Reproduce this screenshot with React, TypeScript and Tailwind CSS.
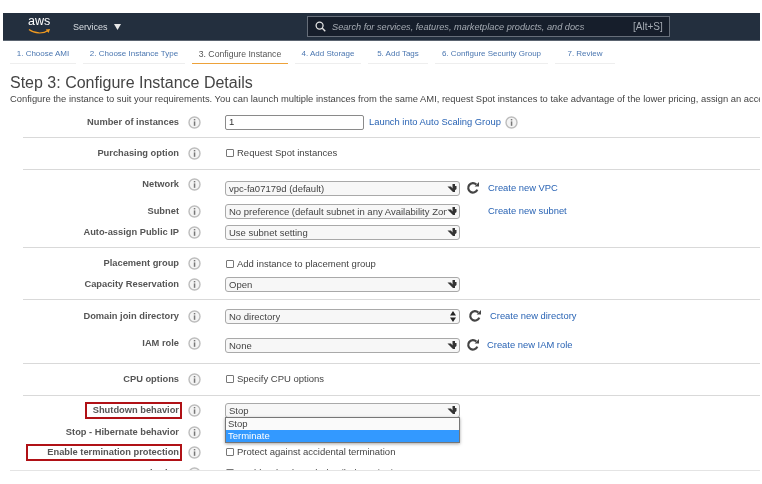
import React from "react";

function Info({ className = "" }: { className?: string }) {
  return (
    <svg width="13" height="13" viewBox="0 0 13 13" className={"shrink-0 " + className}>
      <circle cx="6.5" cy="6.5" r="5.5" fill="#f4f4f4" stroke="#bdbdbd" strokeWidth="1.4" />
      <rect x="5.8" y="5.4" width="1.5" height="4.4" fill="#777" />
      <rect x="5.8" y="3" width="1.5" height="1.4" fill="#777" />
    </svg>
  );
}

function Arrow() {
  return (
    <svg width="10" height="10" viewBox="0 0 10 10" className="shrink-0">
      <path d="M0.5 3.5 L4 3.5 L5.5 5.5 L5.5 1 L8 1 L8 9 L6 9 Z" fill="#333" />
      <path d="M6 3 L9.5 3 L9.5 6 L7 8 Z" fill="#333" />
    </svg>
  );
}

function Stepper() {
  return (
    <svg width="6" height="11" viewBox="0 0 6 11" className="shrink-0">
      <path d="M3 0 L6 4.4 L0 4.4 Z M3 11 L6 6.6 L0 6.6 Z" fill="#222" />
    </svg>
  );
}

function Refresh({ className = "" }: { className?: string }) {
  return (
    <svg width="14" height="14" viewBox="0 0 14 14" fill="none" className={"shrink-0 " + className}>
      <path d="M11.3 8.6 A4.7 4.7 0 1 1 10.3 3.6" stroke="#444" strokeWidth="2.2" />
      <path d="M8.6 5.6 L13 5.6 L13 1 Z" fill="#444" />
    </svg>
  );
}

function Select({ value, stepper = false }: { value: string; stepper?: boolean }) {
  return (
    <div className="w-[235px] h-[15px] shrink-0 flex items-center justify-between pl-[3px] pr-[2px] rounded-[3px] border border-[#a9a9a9] bg-[#f7f7f7] text-[#444] whitespace-nowrap overflow-hidden">
      <span className="overflow-hidden pt-[1px]">{value}</span>
      {stepper ? <span className="pr-[1px]"><Stepper /></span> : <Arrow />}
    </div>
  );
}

function Check({ label }: { label: string }) {
  return (
    <div className="flex items-center gap-[3px] text-[#444] whitespace-nowrap">
      <span className="w-[8px] h-[8px] ml-[1px] border border-[#777] rounded-[1px] bg-white shrink-0" />
      <span>{label}</span>
    </div>
  );
}

function Row({
  label,
  h,
  children,
  box,
  shift = "",
}: {
  label: string;
  h: string;
  children?: React.ReactNode;
  box?: string;
  shift?: string;
}) {
  return (
    <div className={"flex items-center shrink-0 " + h}>
      <div className="w-[156px] shrink-0 flex justify-end">
        <div className="relative font-bold text-[9.3px] text-[#555] whitespace-nowrap">
          {box && <span className={"absolute -top-[2px] -bottom-[3px] -right-[3px] border-2 border-[#b01116] " + box} />}
          {label}
        </div>
      </div>
      <div className="w-[46px] shrink-0 pl-[9px]"><Info /></div>
      <div className={"flex items-center min-w-0 " + shift}>{children}</div>
    </div>
  );
}

function Link({ children, className = "" }: { children: React.ReactNode; className?: string }) {
  return <span className={"text-[#2a64b4] text-[9.4px] whitespace-nowrap " + className}>{children}</span>;
}

function Section({ children, h }: { children: React.ReactNode; h: string }) {
  return <div className={"border-b border-[#d9d9d9] flex flex-col overflow-hidden " + h}>{children}</div>;
}

const tabs = [
  { t: "1. Choose AMI", w: "w-[66px]" },
  { t: "2. Choose Instance Type", w: "w-[102px]" },
  { t: "3. Configure Instance", w: "w-[96px]" },
  { t: "4. Add Storage", w: "w-[66px]" },
  { t: "5. Add Tags", w: "w-[60px]" },
  { t: "6. Configure Security Group", w: "w-[113px]" },
  { t: "7. Review", w: "w-[60px]" },
];

export default function App() {
  return (
    <div className="w-[762px] h-[484px] bg-white overflow-hidden text-[9.5px] leading-[12px] blur-[0.3px]" style={{ fontFamily: '"Liberation Sans", Arial, sans-serif' }}>
      <div className="h-[13px]" />
      <header className="h-[28px] ml-[3px] mr-[2px] bg-[#232f3e] flex items-center border-b border-[#5b6470]">
        <div className="w-[47px] flex justify-end">
          <div className="relative w-[22px] h-[20px] -mt-[3px] text-center text-white text-[12.5px] leading-[13px]">
            aws
            <svg width="23" height="7" viewBox="0 0 24 7" className="absolute left-0 top-[13px]">
              <path d="M1 1.5 C7 6 16 6 21 2.5" stroke="#f09a20" strokeWidth="1.2" fill="none" />
              <path d="M18.5 1.5 L23 1 L21.5 5 Z" fill="#f09a20" />
            </svg>
          </div>
        </div>
        <div className="ml-[23px] w-[49px] shrink-0 flex items-center gap-[6px] text-[#d8dde2] text-[9px]">
          Services
          <svg width="7" height="6" viewBox="0 0 7 6" className="shrink-0"><path d="M0 0 H7 L3.5 6 Z" fill="#e8e8e8" /></svg>
        </div>
        <div className="ml-[185px] w-[363px] h-[21px] bg-[#161e2b] border border-[#666e79] flex items-center text-[#a5abb3] text-[9.2px]">
          <svg width="11" height="11" viewBox="0 0 12 12" fill="none" className="ml-[7px] shrink-0">
            <circle cx="5" cy="5" r="3.8" stroke="#e5e5e5" strokeWidth="1.4" />
            <path d="M8 8 L11.2 11.2" stroke="#e5e5e5" strokeWidth="1.5" />
          </svg>
          <span className="italic ml-[6px] w-[301px] whitespace-nowrap">Search for services, features, marketplace products, and docs</span>
          <span className="whitespace-nowrap text-[10px]">[Alt+S]</span>
        </div>
      </header>

      <nav className="h-[23px] ml-[10px] flex gap-[7px] text-[8px]">
        {tabs.map((x, i) => (
          <div
            key={x.t}
            className={"h-[23px] pt-[3px] flex items-center justify-center whitespace-nowrap border-b " + x.w + (i === 2 ? " border-[#eda23a] text-[#555] text-[8.7px]" : " border-[#eeeeee] text-[#4a76b0]")}
          >
            {x.t}
          </div>
        ))}
      </nav>

      <main className="w-[760px]">
        <h1 className="ml-[10px] mt-[9px] h-[19px] text-[16px] leading-[19px] font-normal text-[#444] whitespace-nowrap">Step 3: Configure Instance Details</h1>
        <p className="ml-[10px] mt-[1px] h-[11px] leading-[11px] text-[9.4px] text-[#444] whitespace-nowrap overflow-hidden">
          Configure the instance to suit your requirements. You can launch multiple instances from the same AMI, request Spot instances to take advantage of the lower pricing, assign an access management role to the instance, and more.
        </p>

        <div className="ml-[23px] mt-[2px]">
          <Section h="h-[32px] pt-[1px]">
            <Row label="Number of instances" h="h-[30px]">
              <div className="w-[139px] h-[15px] pl-[3px] flex items-center border border-[#8a8a8a] rounded-[2px] text-[#333]">1</div>
              <Link className="ml-[5px]">Launch into Auto Scaling Group</Link>
              <Info className="ml-[4px]" />
            </Row>
          </Section>
          <Section h="h-[32px]">
            <Row label="Purchasing option" h="h-[30px]"><Check label="Request Spot instances" /></Row>
          </Section>
          <Section h="h-[78px]">
            <Row label="Network" h="h-[28px]" shift="mt-[8px]">
              <Select value="vpc-fa07179d (default)" />
              <Refresh className="ml-[6px]" />
              <Link className="ml-[8px]">Create new VPC</Link>
            </Row>
            <Row label="Subnet" h="h-[26px]">
              <Select value="No preference (default subnet in any Availability Zone)" />
              <Link className="ml-[28px]">Create new subnet</Link>
            </Row>
            <Row label="Auto-assign Public IP" h="h-[16px]"><Select value="Use subnet setting" /></Row>
          </Section>
          <Section h="h-[52px]">
            <Row label="Placement group" h="h-[30px]" shift="mt-[1px]"><Check label="Add instance to placement group" /></Row>
            <Row label="Capacity Reservation" h="h-[12px]"><Select value="Open" /></Row>
          </Section>
          <Section h="h-[64px]">
            <Row label="Domain join directory" h="h-[32px]">
              <Select value="No directory" stepper />
              <Refresh className="ml-[8px]" />
              <Link className="ml-[8px]">Create new directory</Link>
            </Row>
            <Row label="IAM role" h="h-[22px]" shift="mt-[4px]">
              <Select value="None" />
              <Refresh className="ml-[6px]" />
              <Link className="ml-[7px]">Create new IAM role</Link>
            </Row>
          </Section>
          <Section h="h-[32px]">
            <Row label="CPU options" h="h-[30px]"><Check label="Specify CPU options" /></Row>
          </Section>
          <div className="h-[75px] border-b border-[#e4e4e4] -ml-[13px] pl-[13px] flex flex-col">
            <div className="h-[74px] flex flex-col overflow-hidden shrink-0">
              <Row label="Shutdown behavior" h="h-[28px]" box="-left-[8px]">
                <div className="relative">
                  <Select value="Stop" />
                  <div className="absolute z-10 left-0 top-[14px] w-[235px] h-[26px] bg-[#fafafa] border border-[#767676] shadow-[0_1px_3px_rgba(0,0,0,0.35)] text-[#444]">
                    <div className="h-[12px] pl-[2px] flex items-center">Stop</div>
                    <div className="h-[12px] pl-[2px] flex items-center bg-[#3399ff] text-white">Terminate</div>
                  </div>
                </div>
              </Row>
              <Row label="Stop - Hibernate behavior" h="h-[16px]" />
              <Row label="Enable termination protection" h="h-[24px]" box="-left-[21px]">
                <Check label="Protect against accidental termination" />
              </Row>
              <Row label="Monitoring" h="h-[18px]">
                <Check label="Enable CloudWatch detailed monitoring" />
              </Row>
            </div>
          </div>
        </div>
      </main>
    </div>
  );
}
